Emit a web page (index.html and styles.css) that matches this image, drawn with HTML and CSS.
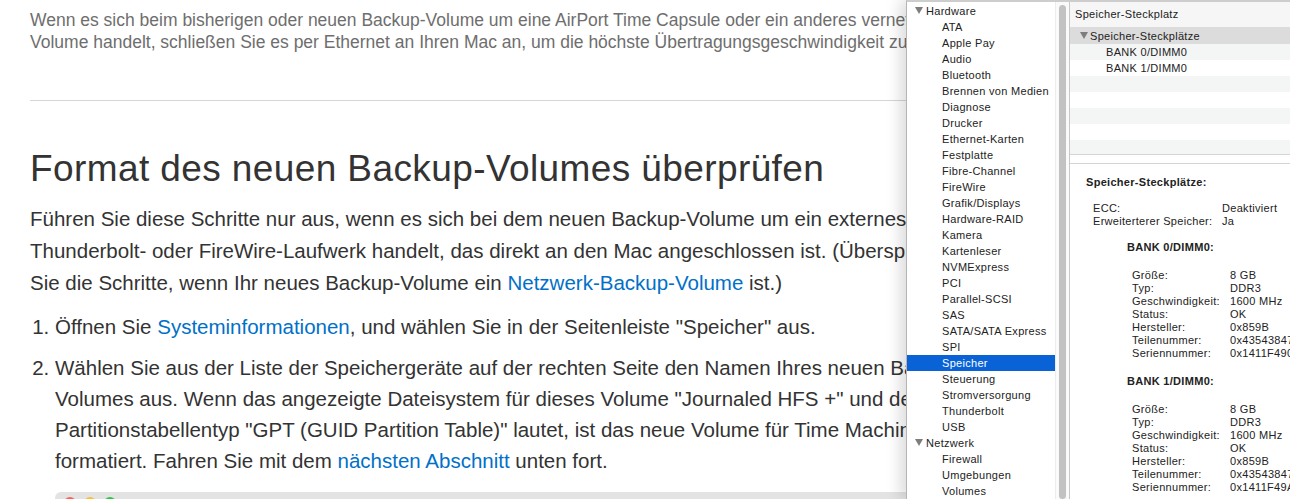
FILE: index.html
```html
<!DOCTYPE html>
<html lang="de">
<head>
  <meta charset="UTF-8">
  <title>Format des neuen Backup-Volumes überprüfen</title>
  <link rel="stylesheet" href="styles.css">
</head>
<body>
  <main class="article">
    <p class="note">Wenn es sich beim bisherigen oder neuen Backup-Volume um eine AirPort Time Capsule oder ein anderes vernetztes<br>Volume handelt, schließen Sie es per Ethernet an Ihren Mac an, um die höchste Übertragungsgeschwindigkeit zu erzielen.</p>
    <hr class="rule">
    <h2>Format des neuen Backup-Volumes überprüfen</h2>
    <p class="text">Führen Sie diese Schritte nur aus, wenn es sich bei dem neuen Backup-Volume um ein externes USB-,<br>Thunderbolt- oder FireWire-Laufwerk handelt, das direkt an den Mac angeschlossen ist. (Überspringen<br>Sie die Schritte, wenn Ihr neues Backup-Volume ein <a href="#">Netzwerk-Backup-Volume</a> ist.)</p>
    <ol class="steps">
      <li>Öffnen Sie <a href="#">Systeminformationen</a>, und wählen Sie in der Seitenleiste "Speicher" aus.</li>
      <li>Wählen Sie aus der Liste der Speichergeräte auf der rechten Seite den Namen Ihres neuen Backup-<br>Volumes aus. Wenn das angezeigte Dateisystem für dieses Volume "Journaled HFS +" und der<br>Partitionstabellentyp "GPT (GUID Partition Table)" lautet, ist das neue Volume für Time Machine korrekt<br>formatiert. Fahren Sie mit dem <a href="#">nächsten Abschnitt</a> unten fort.</li>
    </ol>
    <div class="shot">
      <span class="light red"></span>
      <span class="light yellow"></span>
      <span class="light green"></span>
    </div>
  </main>

  <div class="sysinfo">
    <ul class="sidebar">
      <li class="group"><span class="tri"></span>Hardware</li>
      <li>ATA</li>
      <li>Apple Pay</li>
      <li>Audio</li>
      <li>Bluetooth</li>
      <li>Brennen von Medien</li>
      <li>Diagnose</li>
      <li>Drucker</li>
      <li>Ethernet-Karten</li>
      <li>Festplatte</li>
      <li>Fibre-Channel</li>
      <li>FireWire</li>
      <li>Grafik/Displays</li>
      <li>Hardware-RAID</li>
      <li>Kamera</li>
      <li>Kartenleser</li>
      <li>NVMExpress</li>
      <li>PCI</li>
      <li>Parallel-SCSI</li>
      <li>SAS</li>
      <li>SATA/SATA Express</li>
      <li>SPI</li>
      <li class="selected">Speicher</li>
      <li>Steuerung</li>
      <li>Stromversorgung</li>
      <li>Thunderbolt</li>
      <li>USB</li>
      <li class="group"><span class="tri"></span>Netzwerk</li>
      <li>Firewall</li>
      <li>Umgebungen</li>
      <li>Volumes</li>
    </ul>
    <div class="scroller"><div class="thumb"></div></div>

    <section class="pane">
      <div class="table">
        <div class="table-head">Speicher-Steckplatz</div>
        <div class="table-group"><span class="tri"></span>Speicher-Steckplätze</div>
        <div class="table-rows">
          <div class="table-row">BANK 0/DIMM0</div>
          <div class="table-row">BANK 1/DIMM0</div>
        </div>
      </div>
      <div class="split"></div>
      <div class="detail">
        <h3>Speicher-Steckplätze:</h3>
        <dl class="kv wide">
          <dt>ECC:</dt><dd>Deaktiviert</dd>
          <dt>Erweiterterer Speicher:</dt><dd>Ja</dd>
        </dl>

        <h4>BANK 0/DIMM0:</h4>
        <dl class="kv">
          <dt>Größe:</dt><dd>8 GB</dd>
          <dt>Typ:</dt><dd>DDR3</dd>
          <dt>Geschwindigkeit:</dt><dd>1600 MHz</dd>
          <dt>Status:</dt><dd>OK</dd>
          <dt>Hersteller:</dt><dd>0x859B</dd>
          <dt>Teilenummer:</dt><dd>0x435438474C53</dd>
          <dt>Seriennummer:</dt><dd>0x1411F490</dd>
        </dl>

        <h4>BANK 1/DIMM0:</h4>
        <dl class="kv">
          <dt>Größe:</dt><dd>8 GB</dd>
          <dt>Typ:</dt><dd>DDR3</dd>
          <dt>Geschwindigkeit:</dt><dd>1600 MHz</dd>
          <dt>Status:</dt><dd>OK</dd>
          <dt>Hersteller:</dt><dd>0x859B</dd>
          <dt>Teilenummer:</dt><dd>0x435438474C53</dd>
          <dt>Seriennummer:</dt><dd>0x1411F49A</dd>
        </dl>
      </div>
    </section>
  </div>
</body>
</html>
```

FILE: styles.css
```css
html, body {
  margin: 0;
  height: 100%;
  overflow: hidden;
  background: #fff;
}
body {
  font-family: 'Liberation Sans', Arial, sans-serif;
  color: #333;
}
a {
  color: #0070c9;
  text-decoration: none;
}

/* article, cut off where the window lies over it */
.article {
  width: 876px;
  height: 499px;
  overflow: hidden;
  padding-left: 30px;
}
.note {
  margin: 0;
  padding-top: 9px;
  font-size: 17.5px;
  line-height: 22px;
  color: #6e6e6e;
  white-space: nowrap;
}
.rule {
  margin: 47px 0 0;
  border: none;
  border-top: 1px solid #d6d6d6;
}
h2 {
  margin: 46px 0 0;
  font-size: 37px;
  line-height: 44px;
  font-weight: normal;
  letter-spacing: 0.4px;
  color: #333;
}
.text {
  margin: 12px 0 0;
  font-size: 20.5px;
  line-height: 32px;
  white-space: nowrap;
}
.steps {
  margin: 12px 0 0;
  padding-left: 25px;
  font-size: 20.5px;
  line-height: 31px;
  white-space: nowrap;
}
.steps li + li {
  margin-top: 10px;
}
.shot {
  margin: 16px 0 0 25px;
  height: 40px;
  background: #e3e3e3;
  border-radius: 6px 0 0 0;
  display: flex;
  gap: 8px;
  padding: 5px 0 0 9px;
}
.light {
  width: 12px;
  height: 12px;
  border-radius: 50%;
}
.red { background: #fe5f57; }
.yellow { background: #febc2e; }
.green { background: #28c840; }

/* system information window */
.sysinfo {
  position: absolute;
  top: 0;
  left: 906px;
  right: 0;
  bottom: 0;
  display: flex;
  background: #fff;
  border-top: 2px solid #cdcdcd;
  border-left: 1px solid #b5b5b5;
  box-shadow: -6px 0 14px rgba(0, 0, 0, 0.14);
  font-size: 11px;
  letter-spacing: 0.3px;
  color: #222;
}
.sidebar {
  list-style: none;
  margin: 0;
  padding: 1px 0 0;
  width: 148px;
  flex: none;
}
.sidebar li {
  height: 16px;
  line-height: 16px;
  padding-left: 35px;
  white-space: nowrap;
}
.sidebar li.group {
  padding-left: 8px;
}
.sidebar li.selected {
  background: #0a63d6;
  color: #fff;
}
.tri {
  display: inline-block;
  width: 0;
  height: 0;
  border-left: 4px solid transparent;
  border-right: 4px solid transparent;
  border-top: 7px solid #7d7d7d;
  margin: 4px 3px 0 0;
  vertical-align: top;
}
.scroller {
  width: 15px;
  flex: none;
  border-left: 1px solid #ececec;
  border-right: 1px solid #c8c8c8;
  background: #fafafa;
  padding: 3px 0 0 3px;
  box-sizing: border-box;
}
.thumb {
  width: 7px;
  height: 100%;
  border-radius: 4px;
  background: #c2c2c2;
}
.pane {
  flex: 1;
  display: flex;
  flex-direction: column;
  min-width: 0;
}
.table {
  height: 152px;
  overflow: hidden;
  border-bottom: 1px solid #d4d4d4;
  white-space: nowrap;
}
.table-head {
  height: 25px;
  line-height: 25px;
  padding-left: 5px;
  background: #f6f6f6;
  border-bottom: 1px solid #dcdcdc;
}
.table-group {
  height: 16px;
  line-height: 16px;
  padding-left: 10px;
  background: #dcdcdc;
}
.table-group .tri {
  margin-right: 2px;
}
.table-rows {
  height: 120px;
  background: repeating-linear-gradient(#f4f5f5 0 16px, #fff 16px 32px);
}
.table-row {
  height: 16px;
  line-height: 16px;
  padding-left: 36px;
}
.split {
  height: 8px;
  border-bottom: 1px solid #d4d4d4;
}
.detail {
  padding: 12px 0 0 16px;
  line-height: 13px;
  white-space: nowrap;
}
.detail h3,
.detail h4 {
  margin: 0;
  font-size: 11px;
  line-height: 13px;
  font-weight: bold;
}
.detail h4 {
  margin: 15px 0 0 41px;
}
.kv.wide + h4 {
  margin-top: 13px;
}
.kv {
  display: grid;
  grid-template-columns: 98px auto;
  margin: 15px 0 0 46px;
}
.kv.wide {
  grid-template-columns: 129px auto;
  margin: 13px 0 0 7px;
}
.kv dt,
.kv dd {
  margin: 0;
}
```
